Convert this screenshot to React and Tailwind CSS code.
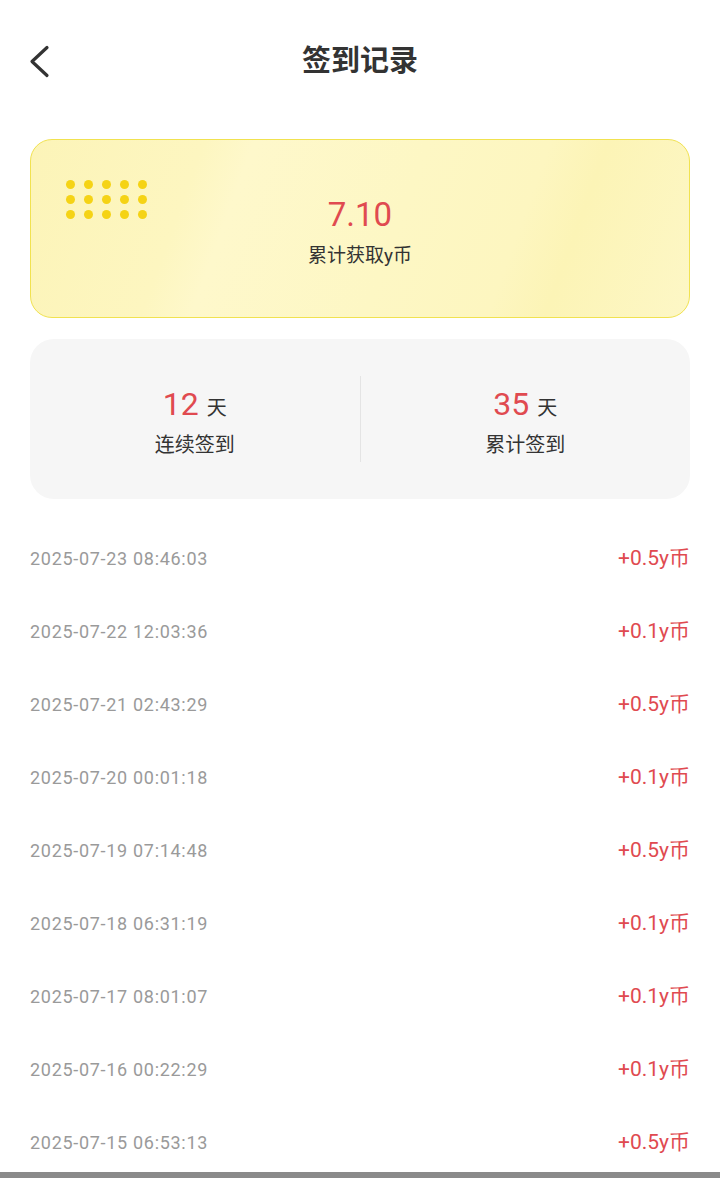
const records = [
  { time: '2025-07-23 08:46:03', amount: '+0.5y币' },
  { time: '2025-07-22 12:03:36', amount: '+0.1y币' },
  { time: '2025-07-21 02:43:29', amount: '+0.5y币' },
  { time: '2025-07-20 00:01:18', amount: '+0.1y币' },
  { time: '2025-07-19 07:14:48', amount: '+0.5y币' },
  { time: '2025-07-18 06:31:19', amount: '+0.1y币' },
  { time: '2025-07-17 08:01:07', amount: '+0.1y币' },
  { time: '2025-07-16 00:22:29', amount: '+0.1y币' },
  { time: '2025-07-15 06:53:13', amount: '+0.5y币' }
];

const StatItem = ({ value, label }) => (
  <div className="flex-1 flex flex-col items-center pt-[4px]">
    <div className="flex items-baseline gap-2">
      <span className="text-[32px] leading-none text-[#e04a50]">{value}</span>
      <span className="text-[20px] leading-none text-[#333]">天</span>
    </div>
    <span className="mt-[15px] text-[20px] leading-none text-[#333]">{label}</span>
  </div>
);

const App = () => {
  return (
    <div className="min-h-[1178px] bg-white font-['Roboto','Noto_Sans_CJK_SC',sans-serif]">
      {/* Header */}
      <div className="relative flex h-[124px] items-center justify-center">
        <button className="absolute left-[28px] top-[45px] text-[#333]">
          <svg width="24" height="33" viewBox="0 0 24 33" fill="none">
            <polyline points="19,2.5 4,16.5 19,30.5" stroke="currentColor" strokeWidth="3.2" strokeLinecap="round" strokeLinejoin="round" />
          </svg>
        </button>
        <h1 className="text-[29px] font-bold text-[#333]">签到记录</h1>
      </div>

      <div className="px-[30px]">
        {/* Total card */}
        <div className="relative mt-[15px] h-[179px] overflow-hidden rounded-[22px] border border-[#f1e250] bg-[linear-gradient(110deg,#fcf4b8_0%,#fdf6c0_24%,#fef8cb_31%,#fdf7c4_55%,#fdf6c0_72%,#fcf4b6_80%,#fdf7c6_100%)]">
          <div className="absolute left-[35px] top-[40px] grid grid-cols-5 gap-x-[9px] gap-y-[6px]">
            {[...Array(15)].map((_, i) => (
              <div key={i} className="h-[9px] w-[9px] rounded-full bg-[#f5d315]"></div>
            ))}
          </div>
          <div className="flex h-full flex-col items-center pt-[58px]">
            <span className="text-[33px] leading-none text-[#e04a50]">7.10</span>
            <span className="mt-[15px] text-[19px] leading-none text-[#333]">累计获取y币</span>
          </div>
        </div>

        {/* Stats card */}
        <div className="mt-[21px] flex h-[160px] items-center rounded-[24px] bg-[#f6f6f6]">
          <StatItem value="12" label="连续签到" />
          <div className="h-[86px] w-px bg-[#e4e4e4]"></div>
          <StatItem value="35" label="累计签到" />
        </div>

        {/* Records */}
        <div className="mt-[23px]">
          {records.map((r) => (
            <div key={r.time} className="flex h-[73px] items-center justify-between">
              <span className="text-[18px] tracking-[0.7px] text-[#9a9a9a]">{r.time}</span>
              <span className="text-[21px] text-[#e04a50]">{r.amount}</span>
            </div>
          ))}
        </div>
      </div>

      <div className="fixed bottom-0 left-0 right-0 h-[6px] bg-[#8a8a8a]"></div>
    </div>
  );
};

export default App;
